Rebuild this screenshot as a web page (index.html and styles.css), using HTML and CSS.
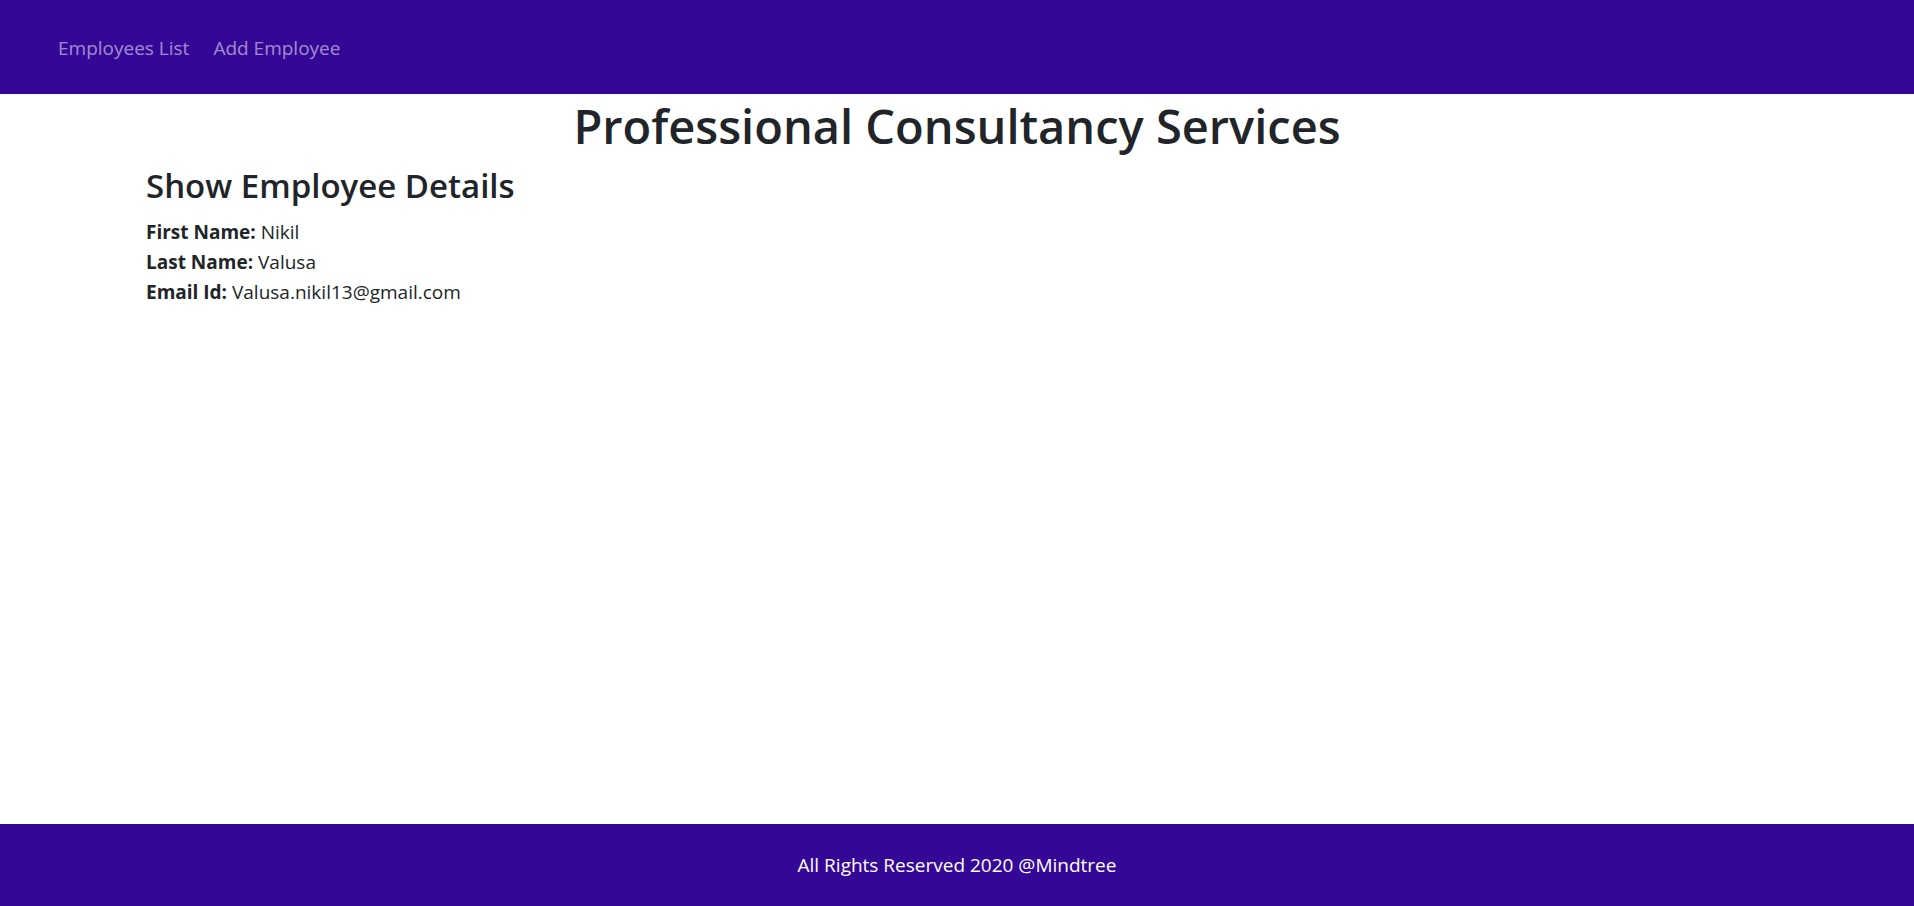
FILE: index.html
```html
<!DOCTYPE html>
<html lang="en">
<head>
<meta charset="utf-8">
<meta name="viewport" content="width=device-width, initial-scale=1">
<title>Employee Details</title>
<link rel="stylesheet" href="styles.css">
</head>
<body>
<header class="site-header">
  <nav class="site-nav">
    <a class="nav-link" href="#employees">Employees List</a>
    <a class="nav-link" href="#add">Add Employee</a>
  </nav>
</header>
<main class="content">
  <h1 class="page-title">Professional Consultancy Services</h1>
  <section class="details">
    <h2 class="details-title">Show Employee Details</h2>
    <div class="detail"><strong>First Name:</strong> Nikil</div>
    <div class="detail"><strong>Last Name:</strong> Valusa</div>
    <div class="detail"><strong>Email Id:</strong> Valusa.nikil13@gmail.com</div>
  </section>
</main>
<footer class="site-footer">All Rights Reserved 2020 @Mindtree</footer>
</body>
</html>
```
FILE: styles.css
```css
* {
  box-sizing: border-box;
}

body {
  display: flex;
  flex-direction: column;
  min-height: 100vh;
  margin: 0;
  background: #fff;
  color: #212529;
  font-family: "Segoe UI", "Open Sans", sans-serif;
  font-size: 19px;
  line-height: 30px;
}

.site-header,
.site-footer {
  background: #340796;
}

.site-header {
  padding: 33px 58px 31px;
}

.site-nav {
  display: flex;
  gap: 24px;
}

.nav-link {
  color: rgba(255, 255, 255, 0.55);
  text-decoration: none;
}

.nav-link:hover {
  color: #fff;
}

.content {
  flex: 1;
}

.page-title,
.details-title {
  font-weight: 600;
}

.page-title {
  margin: 0 0 7px;
  font-size: 47px;
  line-height: 64px;
  text-align: center;
}

.details {
  padding: 0 146px;
}

.details-title {
  margin: 0 0 10px;
  font-size: 33px;
  line-height: 42px;
}

.site-footer {
  padding: 26px 0;
  color: #fff;
  text-align: center;
}
```
